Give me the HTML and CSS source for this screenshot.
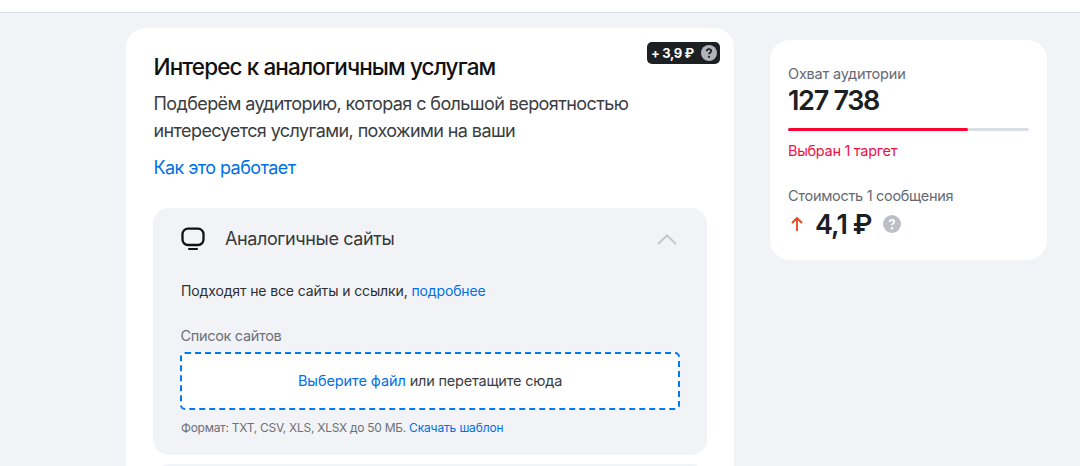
FILE: index.html
```html
<!DOCTYPE html>
<html lang="ru">
<head>
<meta charset="utf-8">
<title>Интерес к аналогичным услугам</title>
<link rel="stylesheet" href="styles.css">
</head>
<body>
<header class="topbar"></header>
<div class="layout">
  <main class="card">
    <div class="price-badge">
      <span>+ 3,9 ₽</span>
      <svg class="q" viewBox="0 0 16 16" width="16" height="16"><circle cx="8" cy="8" r="8" fill="#b0b3b9"/><path d="M5.800 6.200c0-1.300 1-2 2.200-2s2.200.7 2.200 1.900c0 1.700-2.200 1.600-2.200 3.200" fill="none" stroke="#1d2023" stroke-width="1.700"/><circle cx="8" cy="11.800" r="1.100" fill="#1d2023"/></svg>
    </div>
    <h1 class="title">Интерес к аналогичным услугам</h1>
    <p class="lead">Подберём аудиторию, которая с большой вероятностью<br>интересуется услугами, похожими на ваши</p>
    <a class="how">Как это работает</a>
    <section class="panel">
      <div class="panel-head">
        <svg class="tv" viewBox="0 0 24 24" width="24" height="24"><rect x="1.500" y="1.600" width="21" height="16.400" rx="5.500" fill="none" stroke="#111" stroke-width="2.300"/><path d="M8 22h8" stroke="#111" stroke-width="2" stroke-linecap="round"/></svg>
        <span class="panel-title">Аналогичные сайты</span>
        <svg class="chev" viewBox="0 0 22 12" width="22" height="12"><path d="M2 11 11 2.500l9 8.500" fill="none" stroke="#c4c7cc" stroke-width="2"/></svg>
      </div>
      <p class="note">Подходят не все сайты и ссылки, <a>подробнее</a></p>
      <div class="field-label">Список сайтов</div>
      <div class="drop"><a>Выберите файл</a>&nbsp;или перетащите сюда</div>
      <div class="format">Формат: TXT, CSV, XLS, XLSX до 50 МБ. <a>Скачать шаблон</a></div>
    </section>
    <section class="panel next"></section>
  </main>
  <aside class="side">
    <div class="side-label">Охват аудитории</div>
    <div class="reach">127 738</div>
    <div class="bar"><div class="bar-fill"></div></div>
    <div class="selected">Выбран 1 таргет</div>
    <div class="side-label cost">Стоимость 1 сообщения</div>
    <div class="price">
      <svg class="arrow" viewBox="0 0 14 16" width="14" height="16"><path d="M7 15V2M2 7l5-5 5 5" fill="none" stroke="#e8441c" stroke-width="1.800"/></svg>
      <span class="amount">4,1 ₽</span>
      <svg class="q2" viewBox="0 0 18 18" width="18" height="18"><circle cx="9" cy="9" r="9" fill="#bcc0c6"/><path d="M6.700 7c0-1.400 1-2.200 2.300-2.200s2.300.8 2.300 2c0 1.800-2.300 1.700-2.300 3.400" fill="none" stroke="#fff" stroke-width="1.800"/><circle cx="9" cy="13.200" r="1.200" fill="#fff"/></svg>
    </div>
  </aside>
</div>
</body>
</html>
```
FILE: styles.css
```css
* { box-sizing: border-box; }
html, body { margin: 0; height: 466px; overflow: hidden; }
body { background: #f2f3f7; font-family: Inter, "Noto Sans", sans-serif; color: #1d2023; }
a { color: #0070e5; }
.topbar { height: 13px; background: #fff; border-bottom: 1px solid #dcdfe6; }
.layout { display: flex; align-items: flex-start; gap: 36px; padding: 15px 0 0 126px; }
.card { position: relative; width: 608px; height: 451px; overflow: hidden; flex: none; background: #fff; border-radius: 20px 20px 0 0; padding: 24px 27px 0; }
.price-badge { position: absolute; top: 14px; right: 14px; width: 73px; height: 22px; border-radius: 5px; background: #1d2023; color: #fff; display: flex; align-items: center; justify-content: space-between; padding: 0 3px 0 4px; font-size: 13px; font-weight: 700; letter-spacing: -.35px; }
.title { margin: 0 0 0 .5px; font-size: 22.500px; line-height: 30px; font-weight: 500; letter-spacing: -.88px; color: #111; }
.lead { margin: 8px 0 0 .5px; font-size: 18px; line-height: 27px; letter-spacing: -.6px; color: #3a3d41; }
.how { display: block; margin: 10px 0 0 .5px; font-size: 18px; line-height: 27px; letter-spacing: -.58px; }
.panel { width: 554px; background: #f2f3f7; border-radius: 16px; margin-top: 27px; padding: 0 27px 0 28px; height: 247px; }
.panel.next { margin-top: 9px; }
.panel-head { display: flex; align-items: center; height: 61px; }
.tv { flex: none; margin-right: 20px; }
.panel-title { flex: 1; font-size: 18px; letter-spacing: -.4px; color: #36393d; }
.chev { margin-right: 2px; }
.note { margin: 0; padding-top: 11px; font-size: 14px; line-height: 22px; letter-spacing: -.125px; color: #2c2f33; }
.field-label { margin: 23px 0 0 -.5px; font-size: 14.500px; line-height: 22px; letter-spacing: -.33px; color: #6d7178; }
.drop { margin: 5px 0 0 -1px; padding-bottom: 2px; height: 58px; width: 500px; background: #fff; border: 2px dashed #007cf0; border-radius: 5px; display: flex; align-items: center; justify-content: center; font-size: 14.500px; letter-spacing: -.2px; color: #3a3d41; }
.drop a { letter-spacing: -.08px; }
.format { margin-top: 9px; font-size: 12px; line-height: 18px; letter-spacing: -.27px; color: #6d7178; }
.format a { letter-spacing: -.15px; }
.side { width: 277px; flex: none; height: 220px; margin-top: 12px; background: #fff; border-radius: 20px; padding: 23px 18px; }
.side-label { font-size: 14.500px; line-height: 22px; letter-spacing: -.2px; color: #656a72; }
.reach { font-size: 27px; line-height: 31px; font-weight: 600; letter-spacing: -1.300px; color: #1d2023; }
.bar { margin-top: 12px; height: 3px; width: 241px; background: #dcdfe6; border-radius: 2px; }
.bar-fill { width: 180px; height: 100%; background: #ff0032; border-radius: 2px; }
.selected { margin-top: 9px; font-size: 14.500px; line-height: 22px; letter-spacing: -.3px; color: #ee1144; }
.cost { margin-top: 23px; letter-spacing: -.3px; }
.price { display: flex; align-items: center; height: 34px; }
.arrow { margin-left: 2px; }
.amount { margin-left: 11px; font-size: 27px; font-weight: 600; letter-spacing: -.95px; }
.q2 { margin-left: 12px; }
```
